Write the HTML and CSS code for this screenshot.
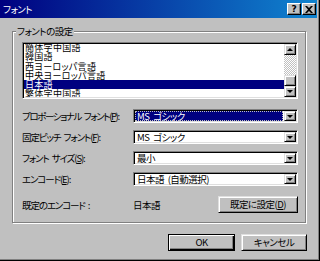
FILE: index.html
```html
<!DOCTYPE html>
<html lang="ja">
<head>
    <meta charset="UTF-8">
    <title>フォント</title>
    <link rel="stylesheet" href="styles.css">
</head>
<body>
    <div class="window">
        <div class="titlebar">
            <span class="title">フォント</span>
            <div class="caption-buttons">
                <span class="cap-btn help">?</span>
                <span class="cap-btn">
                    <svg width="8" height="7" viewBox="0 0 8 7"><path d="M0 0h2l2 2 2-2h2L5 3.5 8 7H6L4 5 2 7H0l3-3.5z" fill="#000"/></svg>
                </span>
            </div>
        </div>

        <div class="group">
            <span class="legend">フォントの設定</span>

            <div class="listbox">
                <ul class="list">
                    <li>簡体字中国語</li>
                    <li>韓国語</li>
                    <li>西ヨーロッパ言語</li>
                    <li>中央ヨーロッパ言語</li>
                    <li class="selected">日本語</li>
                    <li>繁体字中国語</li>
                </ul>
                <div class="scrollbar">
                    <span class="sb-btn"><span class="arrow up"></span></span>
                    <span class="sb-track"></span>
                    <span class="sb-thumb"></span>
                    <span class="sb-btn"><span class="arrow down"></span></span>
                </div>
            </div>

            <div class="field-row">
                <label class="long">プロポーショナル フォント(<u>P</u>):</label>
                <div class="combo">
                    <span class="combo-value focused">MS ゴシック</span>
                    <span class="combo-btn"><span class="arrow down"></span></span>
                </div>
            </div>
            <div class="field-row">
                <label>固定ピッチ フォント(<u>F</u>):</label>
                <div class="combo">
                    <span class="combo-value">MS ゴシック</span>
                    <span class="combo-btn"><span class="arrow down"></span></span>
                </div>
            </div>
            <div class="field-row">
                <label>フォント サイズ(<u>S</u>):</label>
                <div class="combo">
                    <span class="combo-value">最小</span>
                    <span class="combo-btn"><span class="arrow down"></span></span>
                </div>
            </div>
            <div class="field-row">
                <label>エンコード(<u>E</u>):</label>
                <div class="combo">
                    <span class="combo-value">日本語 (自動選択)</span>
                    <span class="combo-btn"><span class="arrow down"></span></span>
                </div>
            </div>

            <div class="default-row">
                <span class="label">既定のエンコード :</span>
                <span class="value">日本語</span>
                <button class="btn set-default">既定に設定(<u>D</u>)</button>
            </div>
        </div>

        <div class="actions">
            <button class="btn default">OK</button>
            <button class="btn">キャンセル</button>
        </div>
    </div>
</body>
</html>
```

FILE: styles.css
```css
* {
    box-sizing: border-box;
}

body {
    margin: 0;
    background-color: #000;
    font-family: "Noto Sans CJK JP", sans-serif;
    font-size: 9.5px;
    letter-spacing: -0.5px;
    color: #000;
    font-feature-settings: "palt";
}

.window {
    width: 320px;
    height: 261px;
    background-color: #c0c0c0;
    box-shadow: inset -1px -1px 0 #000, inset -2px -2px 0 #808080;
    overflow: hidden;
}

/* title bar */
.titlebar {
    height: 18px;
    margin-right: 3px;
    padding-left: 3px;
    display: flex;
    align-items: center;
    background: linear-gradient(to right, #000080, #1084d0);
}

.title {
    color: white;
    line-height: 12px;
}

.caption-buttons {
    margin-left: auto;
    margin-right: 1px;
    display: flex;
    gap: 1px;
}

.cap-btn {
    width: 14px;
    height: 12px;
    display: flex;
    align-items: center;
    justify-content: center;
    background-color: #c0c0c0;
    border: 1px solid;
    border-color: #fff #000 #000 #fff;
    box-shadow: inset -1px -1px 0 #808080;
}

.cap-btn.help {
    font-family: "DejaVu Sans", sans-serif;
    font-weight: bold;
    font-size: 9px;
    line-height: 9px;
    letter-spacing: 0;
}

/* group box */
.group {
    position: relative;
    margin: 13px 14px 0 12px;
    padding: 10px 7px 9px 9px;
    border: 1px solid #808080;
    box-shadow: inset 1px 1px 0 #fff, 1px 1px 0 #fff;
}

.legend {
    position: absolute;
    top: -7px;
    left: 3px;
    padding: 0 1px;
    background-color: #c0c0c0;
    line-height: 12px;
}

/* sunken fields */
.listbox,
.combo {
    background-color: white;
    border: 1px solid;
    border-color: #808080 #fff #fff #808080;
    box-shadow: inset 1px 1px 0 #000, inset -1px -1px 0 #dfdfdf;
    padding: 1px;
}

.listbox {
    height: 57px;
    display: flex;
}

.list {
    flex: 1;
    margin: 0;
    padding: 0;
    list-style: none;
    overflow: hidden;
    font-size: 9px;
    letter-spacing: 0.3px;
}

.list li {
    height: 9.3px;
    line-height: 9.3px;
    padding-left: 1px;
    white-space: nowrap;
}

.list li:first-child {
    margin-top: -1px;
}

.list li.selected {
    background-color: #000080;
    color: white;
}

.scrollbar {
    width: 12px;
    display: flex;
    flex-direction: column;
}

.sb-btn,
.sb-thumb,
.combo-btn,
.btn {
    background-color: #c0c0c0;
    border: 1px solid;
    border-color: #dfdfdf #000 #000 #dfdfdf;
    box-shadow: inset 1px 1px 0 #fff, inset -1px -1px 0 #808080;
}

.sb-btn {
    height: 11px;
    display: flex;
    align-items: center;
    justify-content: center;
}

.sb-track {
    flex: 1;
    background: repeating-conic-gradient(#fff 0 25%, #c0c0c0 0 50%) 0 0 / 2px 2px;
}

.sb-thumb {
    height: 11px;
}

.arrow {
    width: 0;
    height: 0;
    border-left: 3px solid transparent;
    border-right: 3px solid transparent;
}

.arrow.up {
    border-bottom: 3px solid #000;
}

.arrow.down {
    border-top: 3px solid #000;
}

/* label + combo rows */
.field-row {
    display: flex;
    align-items: center;
    margin-top: 7px;
}

.listbox + .field-row {
    margin-top: 10px;
}

.field-row label,
.default-row .label {
    flex: none;
    width: 111px;
    white-space: nowrap;
    letter-spacing: -1.1px;
    word-spacing: 2px;
}

.field-row label.long {
    letter-spacing: -1.4px;
}

.combo {
    flex: none;
    width: 165px;
    height: 14px;
    display: flex;
}

.combo-value {
    flex: 1;
    margin-right: 1px;
    padding-left: 2px;
    line-height: 10px;
    white-space: nowrap;
    word-spacing: 2px;
}

.combo-value.focused {
    background-color: #000080;
    color: white;
    outline: 1px dotted #c0c0c0;
    outline-offset: -1px;
}

.combo-btn {
    width: 12px;
    display: flex;
    align-items: center;
    justify-content: center;
}

/* default encoding */
.default-row {
    display: flex;
    align-items: center;
    margin-top: 10px;
}

.btn {
    font-family: inherit;
    font-size: 9.5px;
    letter-spacing: -0.5px;
    font-feature-settings: "palt";
    color: #000;
    padding: 0;
    height: 17px;
    line-height: 13px;
}

.set-default {
    margin-left: auto;
    width: 80px;
}

/* dialog buttons */
.actions {
    display: flex;
    justify-content: flex-end;
    gap: 6px;
    margin: 11px 13px 0 0;
}

.actions .btn {
    width: 66px;
}

.actions .btn.default {
    width: 67px;
    border-color: #000;
    box-shadow: inset 1px 1px 0 #fff, inset -1px -1px 0 #000, inset -2px -2px 0 #808080;
}
```
